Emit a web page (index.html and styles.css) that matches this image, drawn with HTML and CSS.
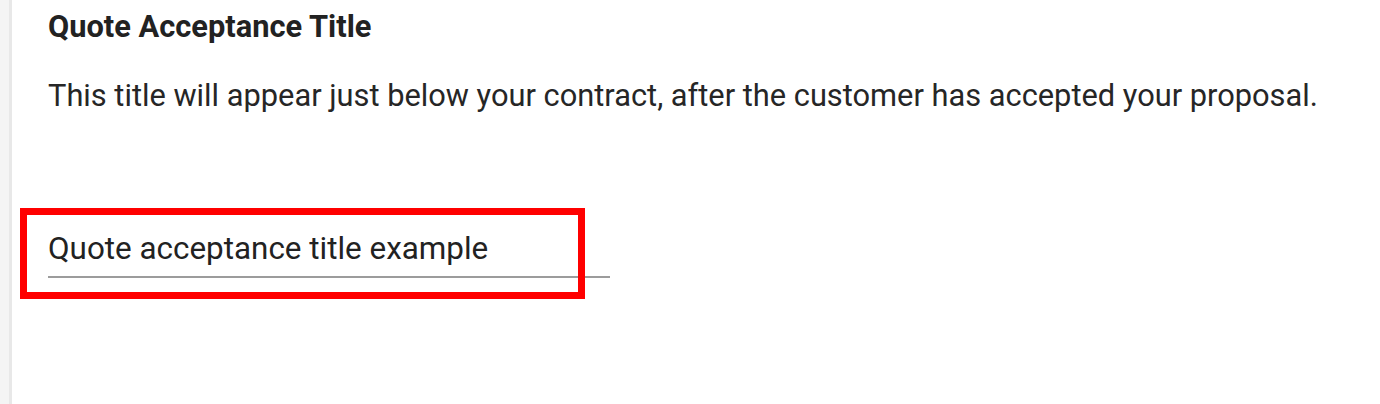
FILE: index.html
```html
<!DOCTYPE html>
<html lang="en">
<head>
  <meta charset="UTF-8">
  <title>Quote Acceptance Title</title>
  <link rel="stylesheet" href="styles.css">
</head>
<body>
  <div class="page">
    <div class="side"></div>
    <div class="panel">
      <h2 class="setting-title">Quote Acceptance Title</h2>
      <p class="setting-desc">This title will appear just below your contract, after the customer has accepted your proposal.</p>
      <div class="field">
        <input class="field-input" type="text" value="Quote acceptance title example">
        <div class="highlight"></div>
      </div>
    </div>
  </div>
</body>
</html>
```

FILE: styles.css
```css
html, body {
  margin: 0;
  padding: 0;
  background-color: #ffffff;
}
body {
  font-family: Roboto, "Liberation Sans", Arial, sans-serif;
  color: #222;
}
.page {
  display: flex;
  height: 404px;
}
.side {
  width: 9px;
  background-color: #f4f4f4;
  border-right: 3px solid #e8e8e8;
}
.panel {
  flex: 1;
  padding: 0 0 0 36px;
}
.setting-title {
  margin: 9px 0 0;
  font-size: 30.8px;
  font-weight: 700;
  line-height: 36px;
  color: #222;
}
.setting-desc {
  margin: 33px 0 0;
  font-size: 30.8px;
  line-height: 36px;
  color: #262626;
}
.field {
  position: relative;
  width: 562px;
  margin-top: 117px;
}
.field-input {
  display: block;
  width: 100%;
  box-sizing: border-box;
  border: none;
  border-bottom: 2px solid #9c9c9c;
  padding: 0 0 9px;
  font-family: inherit;
  font-size: 31.4px;
  line-height: 36px;
  color: #222;
  background: transparent;
  outline: none;
}
.highlight {
  position: absolute;
  left: -28px;
  top: -23px;
  width: 551px;
  height: 77px;
  border: 7px solid #ff0000;
  pointer-events: none;
}
```
